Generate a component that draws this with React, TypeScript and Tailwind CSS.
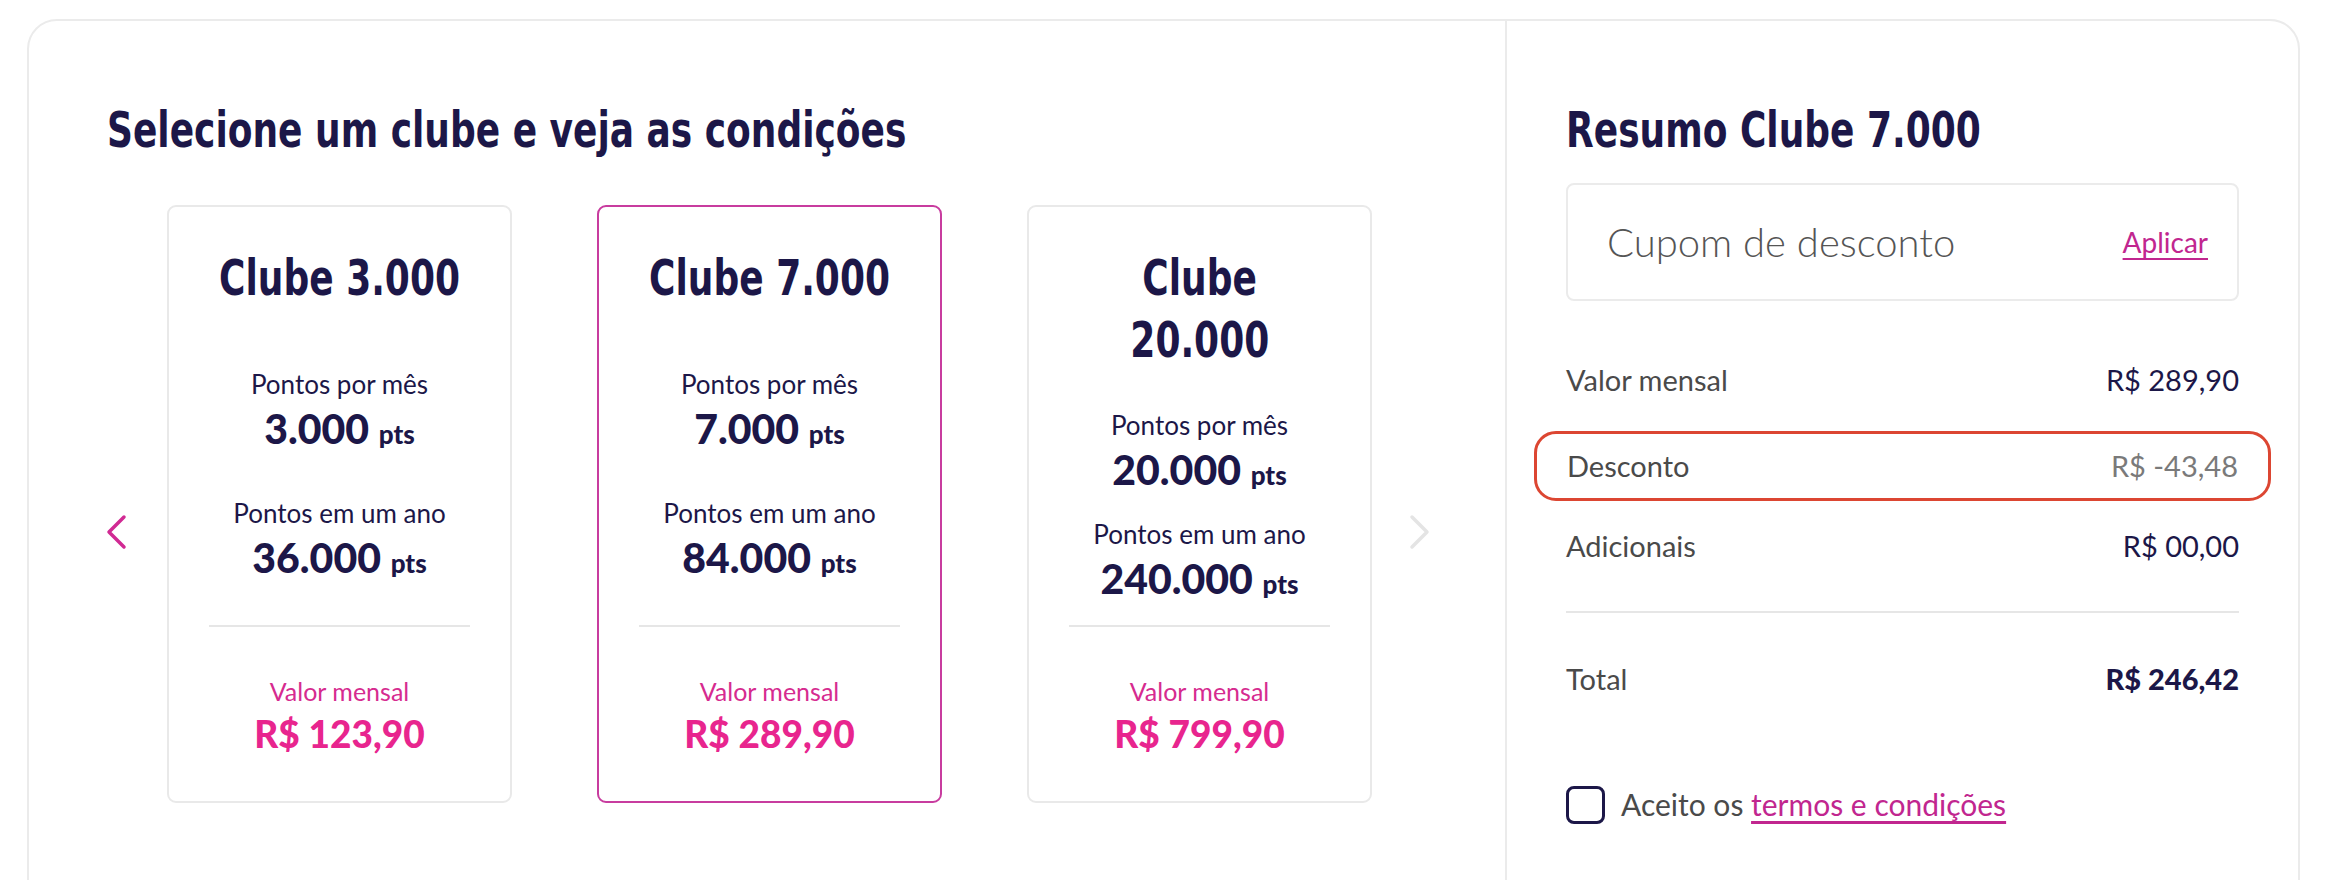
import React from 'react';

type Club = {
  id: string;
  lines: string[];
  perMonth: string;
  perYear: string;
  price: string;
  selected?: boolean;
};

const CLUBS: Club[] = [
  { id: 'c3', lines: ['Clube 3.000'], perMonth: '3.000', perYear: '36.000', price: 'R$ 123,90' },
  { id: 'c7', lines: ['Clube 7.000'], perMonth: '7.000', perYear: '84.000', price: 'R$ 289,90', selected: true },
  { id: 'c20', lines: ['Clube', '20.000'], perMonth: '20.000', perYear: '240.000', price: 'R$ 799,90' },
];

// no narrow face installed, so squeeze the condensed DejaVu a bit further
const heading =
  "font-['DejaVu_Sans_Condensed','DejaVu_Sans',sans-serif] font-bold font-stretch-condensed text-[#1c1748] whitespace-nowrap scale-x-[0.8]";
const body = "font-['Lato',sans-serif]";

const Chevron: React.FC<{ dir: 'left' | 'right'; color: string }> = ({ dir, color }) => (
  <svg width="22" height="36" viewBox="0 0 22 36" fill="none">
    <polyline
      points={dir === 'left' ? '19,3 4,18 19,33' : '3,3 18,18 3,33'}
      stroke={color}
      strokeWidth="3.5"
      strokeLinecap="round"
      strokeLinejoin="round"
    />
  </svg>
);

const PointsPair: React.FC<{ label: string; value: string }> = ({ label, value }) => (
  <div className="flex flex-col items-center">
    <span className={`${body} text-[26px] leading-[36px] text-[#1c1748]`}>{label}</span>
    <span className={`${body} text-[41px] leading-[54px] font-black text-[#1c1748]`}>
      {value} <span className="text-[26px]">pts</span>
    </span>
  </div>
);

const ClubCard: React.FC<{ club: Club }> = ({ club }) => (
  <div
    className={`w-[345px] h-[598px] shrink-0 rounded-[9px] border-2 flex flex-col px-[40px] pt-[40px] ${
      club.selected ? 'border-[#c83c9f]' : 'border-[#e9e9e9]'
    }`}
  >
    <div className="flex flex-col items-center">
      {club.lines.map((l) => (
        <h3 key={l} className={`${heading} text-[50px] leading-[62px] origin-center`}>
          {l}
        </h3>
      ))}
    </div>

    <div className="flex-1 flex flex-col justify-evenly pt-[22px]">
      <PointsPair label="Pontos por mês" value={club.perMonth} />
      <PointsPair label="Pontos em um ano" value={club.perYear} />
    </div>

    <div className="h-[2px] bg-[#e6e6e6]" />

    <div className="flex flex-col items-center pt-[46px] pb-[42px]">
      <span className={`${body} text-[25px] leading-[36px] text-[#d62b8f]`}>Valor mensal</span>
      <span className={`${body} text-[37px] leading-[50px] font-black text-[#e8258e]`}>{club.price}</span>
    </div>
  </div>
);

const SummaryRow: React.FC<{ label: string; value: string; valueClass?: string }> = ({ label, value, valueClass }) => (
  <div className={`${body} flex items-center justify-between text-[29px] leading-[40px]`}>
    <span className="text-[#4a4a4a]">{label}</span>
    <span className={valueClass ?? 'text-[#1c1748]'}>{value}</span>
  </div>
);

export default function App() {
  return (
    <div className="min-h-screen bg-white pl-[27px] pr-[28px] pt-[19px] overflow-hidden">
      <div className="w-[2273px] h-[900px] rounded-[30px] border-2 border-[#ebebeb] flex">
        {/* Left: club selection */}
        <div className="w-[1478px] shrink-0 border-r-2 border-[#ebebeb]">
          <div className="pl-[78px] pt-[79px]">
            <h2 className={`${heading} text-[50px] leading-[60px] origin-left`}>
              Selecione um clube e veja as condições
            </h2>
          </div>

          <div className="flex items-start pl-[76px] mt-[45px]">
            <button className="mt-[309px] mr-[40px]">
              <Chevron dir="left" color="#d12a93" />
            </button>
            <div className="flex gap-[85px]">
              {CLUBS.map((c) => (
                <ClubCard key={c.id} club={c} />
              ))}
            </div>
            <button className="mt-[309px] ml-[37px]">
              <Chevron dir="right" color="#e4e4e4" />
            </button>
          </div>
        </div>

        {/* Right: summary */}
        <div className="flex-1 pl-[59px] pr-[59px]">
          <div className="pt-[79px]">
            <h2 className={`${heading} text-[50px] leading-[60px] origin-left`}>Resumo Clube 7.000</h2>
          </div>

          <div className="mt-[23px] h-[118px] rounded-[8px] border-2 border-[#ebebeb] flex items-center justify-between pl-[39px] pr-[29px]">
            <span className={`${body} font-light text-[40px] text-[#555555]`}>Cupom de desconto</span>
            <a className={`${body} text-[28px] text-[#c1268f] underline underline-offset-[5px]`} href="#">
              Aplicar
            </a>
          </div>

          <div className="mt-[59px]">
            <SummaryRow label="Valor mensal" value="R$ 289,90" />
          </div>

          <div className="mt-[31px] -mx-[32px] h-[70px] px-[30px] rounded-[22px] border-[3px] border-[#dc4632] flex flex-col justify-center">
            <SummaryRow label="Desconto" value="R$ -43,48" valueClass="text-[#7a7a7a]" />
          </div>

          <div className="mt-[25px]">
            <SummaryRow label="Adicionais" value="R$ 00,00" />
          </div>

          <div className="mt-[45px] h-[2px] bg-[#e6e6e6]" />

          <div className="mt-[46px]">
            <SummaryRow label="Total" value="R$ 246,42" valueClass="text-[#1c1748] font-black text-[29px]" />
          </div>

          <label className={`${body} mt-[83px] flex items-center gap-[16px] text-[30px] text-[#4a4a4a]`}>
            <span className="w-[39px] h-[38px] rounded-[8px] border-[3px] border-[#1c1748] shrink-0" />
            <span>
              Aceito os{' '}
              <a href="#" className="text-[#c1268f] underline underline-offset-[5px]">
                termos e condições
              </a>
            </span>
          </label>
        </div>
      </div>
    </div>
  );
}
